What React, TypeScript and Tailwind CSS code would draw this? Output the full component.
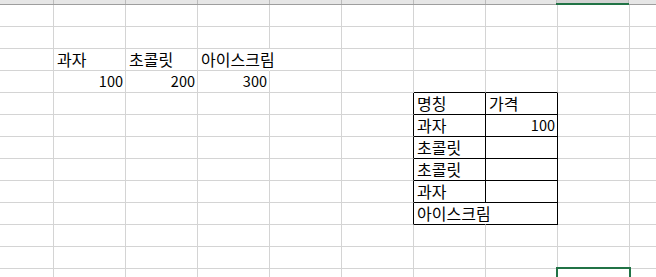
import React from 'react';

type Cell = {
  text?: string;
  align?: 'left' | 'right';
  span?: boolean;
};

// column widths include the 1px right gridline
const colWidths = [54, 72, 72, 72, 72, 72, 72, 72, 72, 72];
const rowCount = 13;

const cells: Record<string, Cell> = {
  '2-1': { text: '과자' },
  '2-2': { text: '초콜릿' },
  '2-3': { text: '아이스크림', span: true },
  '3-1': { text: '100', align: 'right' },
  '3-2': { text: '200', align: 'right' },
  '3-3': { text: '300', align: 'right' },
  '4-6': { text: '명칭' },
  '4-7': { text: '가격' },
  '5-6': { text: '과자' },
  '5-7': { text: '100', align: 'right' },
  '6-6': { text: '초콜릿' },
  '7-6': { text: '초콜릿' },
  '8-6': { text: '과자' },
  '9-6': { text: '아이스크림', span: true },
};

const inTable = (r: number, c: number) => r >= 4 && r <= 9 && c >= 6 && c <= 7;

function borderClasses(r: number, c: number): string {
  const cell = cells[`${r}-${c}`];
  let right = 'border-r-[#d4d4d4]';
  let bottom = 'border-b-[#d4d4d4]';
  if (cell?.span) right = 'border-r-transparent';
  else if ((c === 5 && r >= 4 && r <= 9) || inTable(r, c)) right = 'border-r-black';
  if (inTable(r, c) || (r === 3 && (c === 6 || c === 7))) bottom = 'border-b-black';
  return `${right} ${bottom}`;
}

const SheetCell: React.FC<{ r: number; c: number }> = ({ r, c }) => {
  const cell = cells[`${r}-${c}`];
  const selected = r === 12 && c === 8;
  const numeric = cell?.align === 'right';
  return (
    <div
      className={`relative shrink-0 h-[22px] border-r border-b box-border flex items-end pb-[1px] ${borderClasses(r, c)} ${
        numeric ? 'justify-end pr-[2px]' : 'justify-start pl-[3px]'
      }`}
      style={{ width: colWidths[c] }}
    >
      {cell?.text && (
        <span
          className={`whitespace-nowrap leading-[20px] text-black relative z-10 ${numeric ? 'text-[14.5px]' : 'text-[16px]'}`}
        >
          {cell.text}
        </span>
      )}
      {selected && (
        <div className="absolute left-[-2px] top-[-2px] w-[75px] h-[40px] border-2 border-[#217346] z-20" />
      )}
    </div>
  );
};

const HeaderStrip: React.FC = () => (
  <div className="flex h-[5px] border-b border-[#9e9e9e]">
    {colWidths.map((w, c) => (
      <div
        key={c}
        className={`shrink-0 h-[4px] border-r border-[#bcbcbc] ${c === 8 ? 'bg-[#d2d2d2] relative' : 'bg-[#e6e6e6]'}`}
        style={{ width: c === 7 ? w - 1 : w }}
      >
        {c === 8 && <div className="absolute left-[-1px] right-[-1px] bottom-[-1px] h-[2px] bg-[#217346]" />}
      </div>
    ))}
  </div>
);

export default function App() {
  return (
    <div
      className="w-[656px] h-[277px] overflow-hidden bg-white"
      style={{ fontFamily: '"Noto Sans CJK KR", "Noto Sans", sans-serif' }}
    >
      <div className="w-[700px]">
        <HeaderStrip />
        {Array.from({ length: rowCount }).map((_, r) => (
          <div key={r} className="flex">
            {colWidths.map((_, c) => (
              <SheetCell key={c} r={r} c={c} />
            ))}
          </div>
        ))}
      </div>
    </div>
  );
}
